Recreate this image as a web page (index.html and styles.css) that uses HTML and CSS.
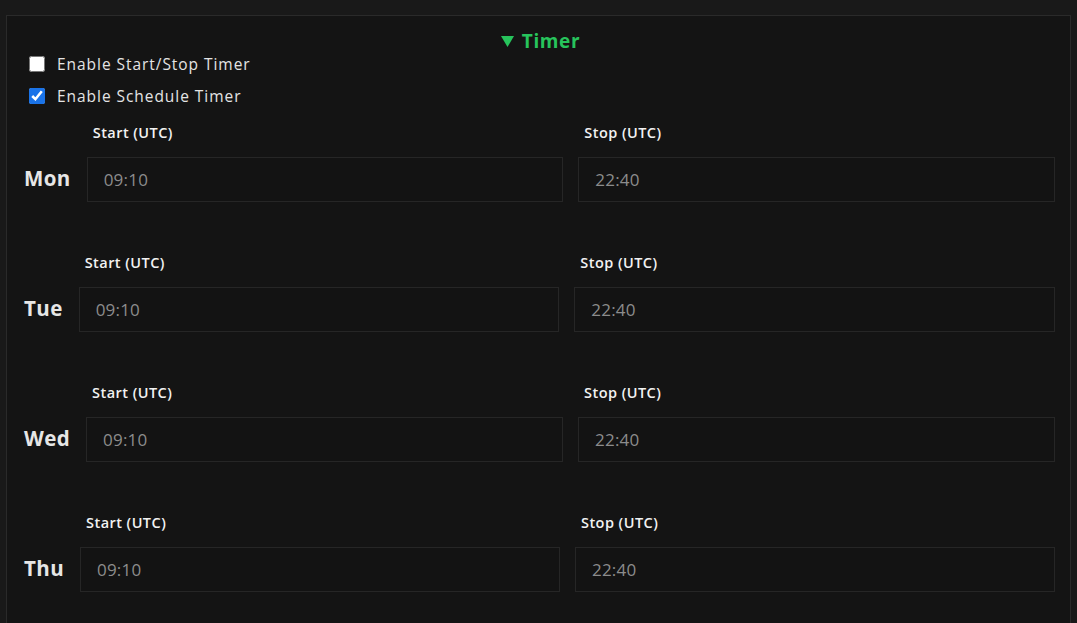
FILE: index.html
```html
<!DOCTYPE html>
<html>
<head>
<meta charset="utf-8">
<link rel="stylesheet" href="styles.css">
</head>
<body>
<div class="panel">
  <div class="title"><svg class="caret" width="13" height="11" viewBox="0 0 13 11"><polygon points="0,0 13,0 6.5,11" fill="#27c45c"/></svg>Timer</div>
  <label class="check"><input type="checkbox"> Enable Start/Stop Timer</label>
  <label class="check"><input type="checkbox" checked> Enable Schedule Timer</label>
  <div class="schedule">
    <div class="day">
      <div class="dayname">Mon</div>
      <div class="cols">
        <div class="field"><div class="flabel">Start (UTC)</div><input class="tinput" value="09:10"></div>
        <div class="field"><div class="flabel">Stop (UTC)</div><input class="tinput" value="22:40"></div>
      </div>
    </div>
    <div class="day">
      <div class="dayname">Tue</div>
      <div class="cols">
        <div class="field"><div class="flabel">Start (UTC)</div><input class="tinput" value="09:10"></div>
        <div class="field"><div class="flabel">Stop (UTC)</div><input class="tinput" value="22:40"></div>
      </div>
    </div>
    <div class="day">
      <div class="dayname">Wed</div>
      <div class="cols">
        <div class="field"><div class="flabel">Start (UTC)</div><input class="tinput" value="09:10"></div>
        <div class="field"><div class="flabel">Stop (UTC)</div><input class="tinput" value="22:40"></div>
      </div>
    </div>
    <div class="day">
      <div class="dayname">Thu</div>
      <div class="cols">
        <div class="field"><div class="flabel">Start (UTC)</div><input class="tinput" value="09:10"></div>
        <div class="field"><div class="flabel">Stop (UTC)</div><input class="tinput" value="22:40"></div>
      </div>
    </div>
  </div>
</div>
</body>
</html>
```
FILE: styles.css
```css
html, body {
  margin: 0;
  padding: 0;
  background: #191919;
  font-family: "Open Sans", "Noto Sans", sans-serif;
  color: #e8e8e8;
  overflow: hidden;
}
.panel {
  margin: 15px 6px 0 6px;
  border: 1px solid #2a2a2a;
  border-bottom: none;
  background: #141414;
  padding: 13px 15px 40px 17px;
  min-height: 640px;
  box-sizing: border-box;
}
.title {
  display: flex;
  justify-content: center;
  align-items: center;
  gap: 8px;
  color: #27c45c;
  font-weight: 700;
  font-size: 19px;
  line-height: 24px;
  letter-spacing: 0.6px;
  padding-left: 2px;
}
.caret {
  display: block;
  margin-top: 1px;
}
.check {
  display: flex;
  align-items: center;
  height: 32px;
  font-size: 15.5px;
  color: #e4e4e4;
  margin-left: 5px;
  letter-spacing: 0.95px;
}
.check:first-of-type {
  margin-top: -5px;
}
.check input {
  width: 16px;
  height: 16px;
  margin: 0 12px 0 0;
  accent-color: #1a73e8;
}
.schedule {
  display: flex;
  flex-direction: column;
  gap: 52px;
  margin-top: 12px;
}
.day {
  display: flex;
  align-items: flex-end;
  gap: 16px;
}
.dayname {
  font-weight: 700;
  font-size: 20.5px;
  letter-spacing: 0.4px;
  height: 45px;
  line-height: 42px;
  color: #e6e6e6;
}
.cols {
  flex: 1;
  display: grid;
  grid-template-columns: 1fr 1fr;
  gap: 15px;
}
.field {
  display: flex;
  flex-direction: column;
}
.flabel {
  font-size: 14.5px;
  font-weight: 600;
  line-height: 17px;
  letter-spacing: 0.45px;
  margin: 0 0 16px 6px;
  color: #f2f2f2;
}
.tinput {
  height: 45px;
  box-sizing: border-box;
  border: 1px solid #262626;
  background: #131313;
  color: #8c8c8c;
  font-family: inherit;
  font-size: 17px;
  letter-spacing: 0.2px;
  padding: 0 16px;
  outline: none;
  width: 100%;
}
```
